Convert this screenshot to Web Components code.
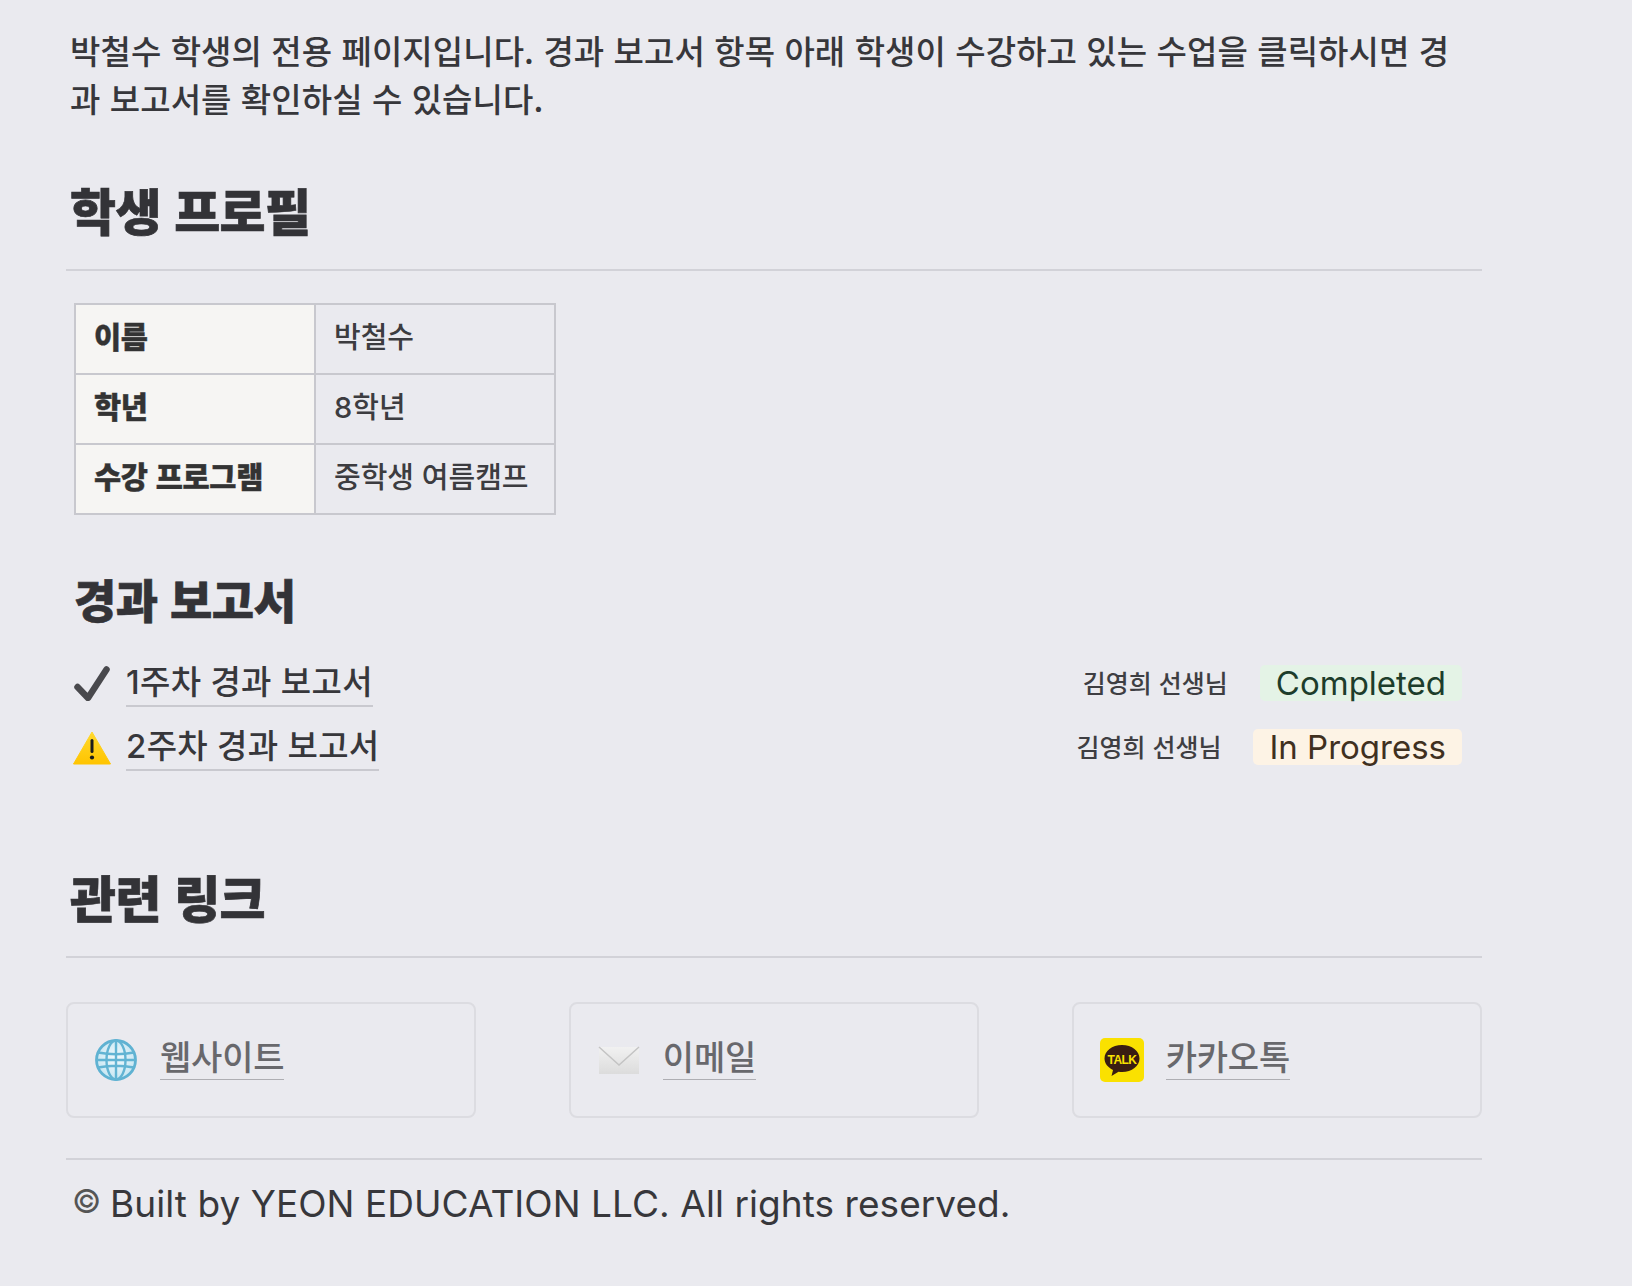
<!DOCTYPE html>
<html lang="ko"><head><meta charset="utf-8"><title>학생 페이지</title>
<style>
html,body{margin:0;padding:0;background:#eaeaef}
body{font-family:"Inter","Noto Sans CJK KR",sans-serif;color:#37373b}
</style></head><body>
<student-page>
  <intro-text>박철수 학생의 전용 페이지입니다. 경과 보고서 항목 아래 학생이 수강하고 있는 수업을 클릭하시면 경<br>과 보고서를 확인하실 수 있습니다.</intro-text>
  <section-title>학생 프로필</section-title>
  <profile-table></profile-table>
  <report-list></report-list>
  <section-title class="links">관련 링크</section-title>
  <link-grid>
    <link-card label="웹사이트" icon="globe"></link-card>
    <link-card label="이메일" icon="mail"></link-card>
    <link-card label="카카오톡" icon="talk"></link-card>
  </link-grid>
  <page-footer>Built by YEON EDUCATION LLC. All rights reserved.</page-footer>
</student-page>
<script>
const KR='"Noto Sans CJK KR","Noto Sans",sans-serif';
const LAT='"Inter","Noto Sans CJK KR",sans-serif';
function def(name,html,init){
  customElements.define(name,class extends HTMLElement{
    constructor(){super();this.attachShadow({mode:'open'}).innerHTML=html;}
    connectedCallback(){if(init)init.call(this,this.shadowRoot);}
  });
}
def('student-page',`<style>:host{display:block;box-sizing:border-box;width:1632px;height:1286px;padding:26px 150px 0 66px;overflow:hidden}</style><slot></slot>`);
def('intro-text',`<style>:host{display:block;padding-left:4px;font:500 33px/48px ${KR};letter-spacing:.08px;color:#37373b}</style><slot></slot>`);
def('section-title',`<style>
:host{display:block;margin-top:53px}
:host(.links){margin-top:19px}
h2{margin:0;padding:0 0 26px 4px;font:900 50px/68px ${KR};letter-spacing:-.6px;color:#333337;-webkit-text-stroke:.7px #333337;border-bottom:2px solid #d2d2d8}
</style><h2><slot></slot></h2>`);
const rows=[['이름','박철수'],['학년','8학년'],['수강 프로그램','중학생 여름캠프']];
def('profile-table',`<style>
:host{display:block;margin:32px 0 0 8px}
table{border-collapse:collapse;table-layout:fixed;width:482px;font:500 29px/40px ${LAT};color:#3c3c40}
th,td{border:2px solid #c8c8ce;height:70px;box-sizing:border-box;padding:0 0 3px 18px;text-align:left;white-space:nowrap}
th{background:#f6f5f3;padding-bottom:9px;font-weight:900;font-family:${KR};font-size:29.500px;color:#333;letter-spacing:-.3px;-webkit-text-stroke:.4px #333}
</style><table><tbody>${rows.map(r=>`<tr><th>${r[0]}</th><td>${r[1]}</td></tr>`).join('')}</tbody></table>`);
const checkSvg=`<svg width="38" height="38" viewBox="0 0 38 38"><filter id="b"><feGaussianBlur stdDeviation=".6"/></filter><path d="M4.500 22 L15 33 L33.500 4.500" fill="none" stroke="#4a4a4e" stroke-width="6.500" stroke-linecap="round" stroke-linejoin="round" filter="url(#b)"/></svg>`;
const warnSvg=`<svg width="38" height="34" viewBox="0 0 38 34"><defs><linearGradient id="w" x1="0" y1="0" x2="0" y2="1"><stop offset="0" stop-color="#ffd92e"/><stop offset="1" stop-color="#ffc400"/></linearGradient></defs><path d="M19 1 L37.500 33 H.5 Z" fill="url(#w)" stroke="url(#w)" stroke-linejoin="round"/><rect x="17.500" y="8" width="3" height="14" rx="1.500" fill="#1c1c1c"/><circle cx="19" cy="26.500" r="2.100" fill="#1c1c1c"/></svg>`;
def('report-row',`<style>
:host{display:flex;align-items:flex-start;height:64px;padding:0 20px 0 7px;box-sizing:border-box;width:100%}
.ic{width:38px;height:38px;flex:none;margin-top:6px;display:flex;align-items:center;justify-content:center}
a{margin-left:15px;font:500 33px/46px ${LAT};letter-spacing:.3px;color:#37373b;border-bottom:2px solid #c9c9cf;text-decoration:none;padding-bottom:0}
.t{margin-left:auto;font:500 25px/36px ${KR};color:#3e3e42;margin-top:5px}
.b{margin:6px 0 0 32px;font:400 33px/36px ${LAT};padding:0 16px;border-radius:5px}
</style><span class="ic"></span><a href="#"></a><span class="t"></span><span class="b"></span>`,function(s){
  s.querySelector('.ic').innerHTML=this.getAttribute('kind')==='done'?checkSvg:warnSvg;
  s.querySelector('a').textContent=this.getAttribute('title');
  s.querySelector('.t').textContent=this.getAttribute('teacher');
  const b=s.querySelector('.b');b.textContent=this.getAttribute('status');
  if(this.getAttribute('kind')==='done'){b.style.background='#e4f3e6';b.style.color='#1d3d2b';}
  else{b.style.background='#fdf3e5';b.style.color='#40301f';}
});
def('report-list',`<style>
:host{display:block;margin-top:0}
h3{margin:0;padding:53px 0 0 8px;font:900 46px/60px ${KR};letter-spacing:-.5px;color:#333337;-webkit-text-stroke:.6px #333337}
.rows{margin-top:31px}
</style><h3>경과 보고서</h3><div class="rows"><report-row kind="done" title="1주차 경과 보고서" teacher="김영희 선생님" status="Completed"></report-row><report-row kind="warn" title="2주차 경과 보고서" teacher="김영희 선생님" status="In Progress"></report-row></div><div style="height:56px"></div>`);
def('link-grid',`<style>:host{display:grid;grid-template-columns:repeat(3,1fr);column-gap:92.500px;margin-top:44px}</style><slot></slot>`);
const icons={
globe:`<svg width="44" height="44" viewBox="0 0 44 44"><defs><radialGradient id="g" cx=".5" cy=".45" r=".6"><stop offset="0" stop-color="#f2fafd"/><stop offset="1" stop-color="#c2e4f1"/></radialGradient><filter id="gb"><feGaussianBlur stdDeviation=".45"/></filter></defs><g fill="none" stroke="#62b4d3" stroke-width="2.400" filter="url(#gb)"><circle cx="22" cy="22" r="19.500" fill="url(#g)" stroke="#5fb2d2" stroke-width="2.800"/><ellipse cx="22" cy="22" rx="9.500" ry="19.500"/><path d="M22 2.500V41.500M4 14.500Q22 18 40 14.500M2.500 22H41.500M4 29.500Q22 26 40 29.500"/></g></svg>`,
mail:`<svg width="44" height="32" viewBox="0 0 44 32"><defs><linearGradient id="m" x1="0" y1="0" x2="0" y2="1"><stop offset="0" stop-color="#f1f1f1"/><stop offset="1" stop-color="#dcdcdc"/></linearGradient><filter id="mb"><feGaussianBlur stdDeviation=".6"/></filter></defs><g filter="url(#mb)"><rect x="2" y="3" width="40" height="27" fill="url(#m)"/><path d="M2 3 L22 21 L42 3" fill="none" stroke="#c4c4c4" stroke-width="1.500"/></g></svg>`,
talk:`<svg width="44" height="44" viewBox="0 0 44 44"><rect width="44" height="44" rx="5" fill="#fae100"/><path d="M22 7C12 7 4.500 13 4.500 20.500C4.500 25.500 8 29.500 13 32L11.500 38L18.500 33.700C19.500 33.800 21 34 22 34C32 34 39.500 28 39.500 20.500C39.500 13 32 7 22 7Z" fill="#3a1d12"/><text x="22" y="25.500" text-anchor="middle" font-family="Liberation Sans" font-weight="700" font-size="12" letter-spacing="-.5" fill="#fae100">TALK</text></svg>`};
def('link-card',`<style>
:host{display:flex;align-items:flex-start;box-sizing:border-box;height:116px;border:2px solid #dcdce1;border-radius:8px;padding:0 0 0 26px}
.ic{width:44px;height:44px;flex:none;margin-top:34px;display:flex;align-items:center;justify-content:center}
a{margin:28px 0 0 22px;height:47px;font:500 34px/48px ${KR};letter-spacing:-.2px;color:#68686c;text-decoration:none;border-bottom:1px solid #aeaeb3}
</style><span class="ic"></span><a href="#"></a>`,function(s){
  s.querySelector('.ic').innerHTML=icons[this.getAttribute('icon')];
  s.querySelector('a').textContent=this.getAttribute('label');
});
def('page-footer',`<style>
:host{display:block;margin-top:40px;border-top:2px solid #d2d2d8;padding:18px 0 0 6px;font:400 37px/48px ${LAT};letter-spacing:.06px;color:#37373b}
.c{display:inline-block;font-size:32px;vertical-align:4px;margin-right:12px;width:26px;color:#555}
</style><span class="c">©</span><slot></slot>`);
</script>
</body></html>
